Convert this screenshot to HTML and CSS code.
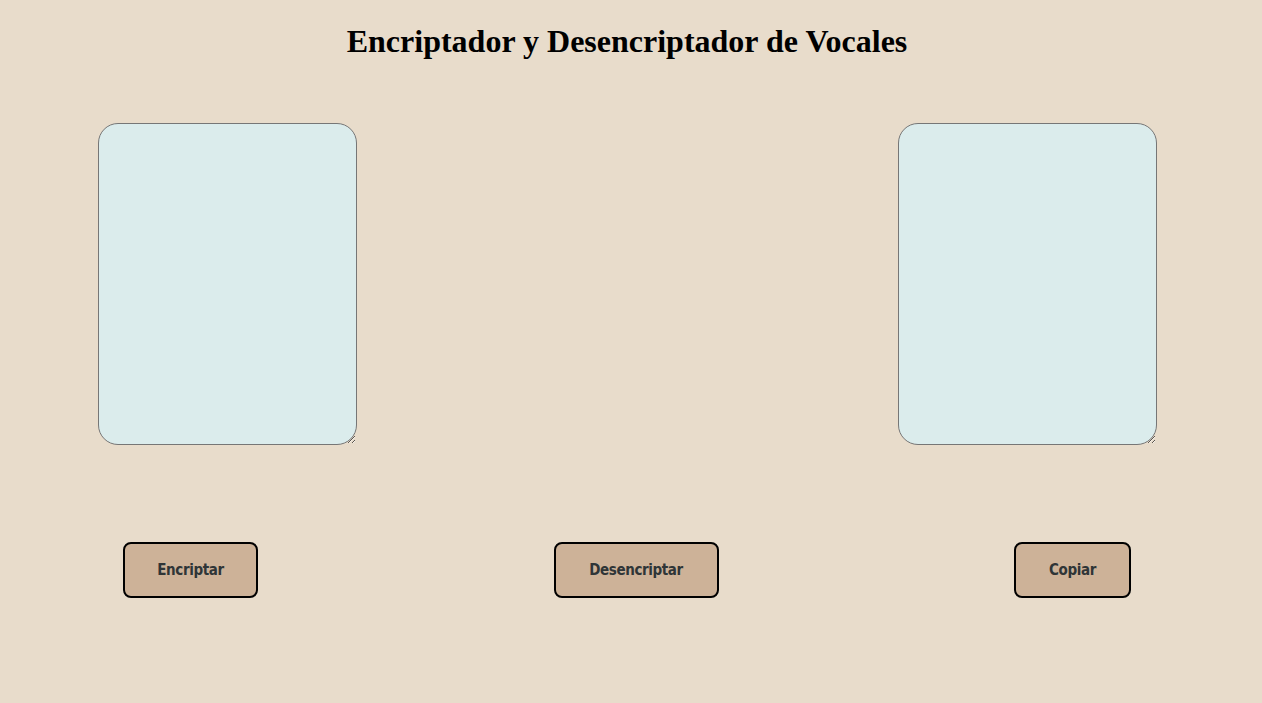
FILE: index.html
```html
<!DOCTYPE html>
<html lang="es">
<head>
<meta charset="utf-8">
<title>Encriptador</title>
<link rel="stylesheet" href="styles.css">
</head>
<body>
<h1 class="title">Encriptador y Desencriptador de Vocales</h1>
<div class="areas">
  <textarea class="box"></textarea>
  <textarea class="box"></textarea>
</div>
<div class="buttons">
  <button class="btn btn-enc">Encriptar</button>
  <button class="btn btn-dec">Desencriptar</button>
  <button class="btn btn-copy">Copiar</button>
</div>
</body>
</html>
```

FILE: styles.css
```css
body {
  margin: 8px;
  background: #e8dccb;
  font-family: "Liberation Serif", serif;
}
.title {
  margin: 15px 0 0;
  padding-right: 8px;
  text-align: center;
  font-size: 32px;
  font-weight: bold;
  line-height: 37px;
  color: #000;
}
.areas {
  display: flex;
  justify-content: space-between;
  padding: 0 97px 0 90px;
  margin-top: 63px;
}
.box {
  width: 259px;
  height: 322px;
  box-sizing: border-box;
  margin: 0;
  border: 1px solid #767676;
  border-radius: 20px;
  background: #dbecec;
  padding: 2px;
}
.buttons {
  display: flex;
  justify-content: space-between;
  padding: 0 123px 0 115px;
  margin-top: 97px;
}
.btn {
  box-sizing: border-box;
  height: 56px;
  border: 2px solid #000;
  border-radius: 8px;
  background: #cdb298;
  color: #2f3537;
  font-family: "DejaVu Sans Condensed", sans-serif;
  font-weight: bold;
  font-size: 15px;
  letter-spacing: -0.4px;
  padding: 0;
  margin: 0;
}
.btn-enc { width: 135px; }
.btn-dec { width: 165px; }
.btn-copy { width: 117px; }
```
